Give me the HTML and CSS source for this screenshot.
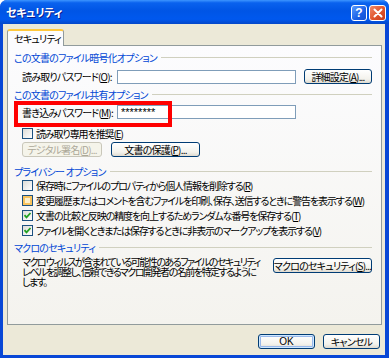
FILE: index.html
```html
<!DOCTYPE html>
<html lang="ja">
<head>
    <meta charset="UTF-8">
    <title>セキュリティ</title>
    <link rel="stylesheet" href="styles.css">
</head>
<body>

    <div class="window">
        <div class="titlebar">
            <span class="title">セキュリティ</span>
            <div class="controls">
                <div class="tbtn help">?</div>
                <div class="tbtn close">
                    <svg width="10" height="10" viewBox="0 0 10 10"><path d="M1.5 1.5 L8.5 8.5 M8.5 1.5 L1.5 8.5" stroke="#fff" stroke-width="2" stroke-linecap="round"/></svg>
                </div>
            </div>
        </div>

        <div class="client">
            <div class="tabs">
                <div class="tab">セキュリティ</div>
            </div>

            <div class="panel">
                <div class="group-title first">この文書のファイル暗号化オプション</div>
                <div class="row row-read">
                    <span class="label">読み取りパスワード(<u>O</u>):</span>
                    <div class="input"></div>
                    <div class="btn btn-adv">詳細設定(<u>A</u>)...</div>
                </div>

                <div class="group-title g2">この文書のファイル共有オプション</div>
                <div class="row row-write">
                    <span class="label">書き込みパスワード(<u>M</u>):</span>
                    <div class="input">********</div>
                </div>
                <div class="check-row ro">
                    <span class="cb"></span>
                    <span>読み取り専用を推奨(<u>E</u>)</span>
                </div>
                <div class="row row-buttons">
                    <div class="btn disabled btn-sign">デジタル署名(<u>D</u>)...</div>
                    <div class="btn btn-protect">文書の保護(<u>P</u>)...</div>
                </div>

                <div class="group-title g3">プライバシー オプション</div>
                <div class="checks">
                    <div class="check-row">
                        <span class="cb"></span>
                        <span>保存時にファイルのプロパティから個人情報を削除する(<u>R</u>)</span>
                    </div>
                    <div class="check-row">
                        <span class="cb hot"></span>
                        <span>変更履歴またはコメントを含むファイルを印刷、保存、送信するときに警告を表示する(<u>W</u>)</span>
                    </div>
                    <div class="check-row">
                        <span class="cb on"><svg width="9" height="9" viewBox="0 0 9 9"><path d="M1.5 4.2 L3.5 6.4 L7.5 2" stroke="#21A121" stroke-width="1.8" fill="none"/></svg></span>
                        <span>文書の比較と反映の精度を向上するためランダムな番号を保存する(<u>T</u>)</span>
                    </div>
                    <div class="check-row">
                        <span class="cb on"><svg width="9" height="9" viewBox="0 0 9 9"><path d="M1.5 4.2 L3.5 6.4 L7.5 2" stroke="#21A121" stroke-width="1.8" fill="none"/></svg></span>
                        <span>ファイルを開くときまたは保存するときに非表示のマークアップを表示する(<u>V</u>)</span>
                    </div>
                </div>

                <div class="group-title g4">マクロのセキュリティ</div>
                <div class="row row-macro">
                    <p class="macro-text">マクロ ウィルスが含まれている可能性のあるファイルのセキュリティ<br>レベルを調整し、信頼できるマクロ開発者の名前を特定するように<br>します。</p>
                    <div class="btn btn-macro">マクロのセキュリティ(<u>S</u>)...</div>
                </div>
            </div>

            <div class="footer">
                <div class="btn default">OK</div>
                <div class="btn">キャンセル</div>
            </div>
        </div>

        <!-- annotation frame -->
        <div class="highlight"></div>
    </div>

</body>
</html>
```

FILE: styles.css
```css
body {
    margin: 0;
    font-family: "Noto Sans CJK JP", sans-serif;
    font-size: 10px;
    font-feature-settings: "palt";
    letter-spacing: -0.8px;
    color: #000;
    background: #fff;
}

u {
    text-decoration: underline;
    text-underline-offset: 1px;
}

.window {
    position: relative;
    width: 389px;
    height: 358px;
    box-sizing: border-box;
    background: #0847D6;
    border-radius: 7px 7px 0 0;
    display: flex;
    flex-direction: column;
    overflow: hidden;
}

.titlebar {
    height: 24px;
    flex: none;
    display: flex;
    align-items: center;
    padding: 0 3px 0 6px;
    background: linear-gradient(#3D95FF 0%, #0A62EE 12%, #0055E5 45%, #0058EE 80%, #0447C8 100%);
}

.title {
    color: #fff;
    font-weight: bold;
    font-size: 11px;
    letter-spacing: -0.3px;
    text-shadow: 1px 1px #0A1E8E;
}

.controls {
    margin-left: auto;
    display: flex;
    gap: 2px;
    margin-top: 1px;
}

.tbtn {
    width: 16px;
    height: 16px;
    box-sizing: border-box;
    border: 1px solid #fff;
    border-radius: 3px;
    display: flex;
    align-items: center;
    justify-content: center;
    color: #fff;
    font-family: "Liberation Sans", sans-serif;
    font-weight: bold;
    font-size: 12px;
    letter-spacing: 0;
}

.help {
    background: linear-gradient(135deg, #5A9CFF, #1A5FE6 60%, #1450D0);
}

.close {
    width: 17px;
    background: linear-gradient(135deg, #F08A6A, #E0542B 55%, #C5391A);
}

.client {
    flex: 1;
    margin: 0 4px 3px 3px;
    padding: 5px 3px 0 4px;
    background: #ECE9D8;
}

.tabs {
    display: flex;
    height: 16px;
    position: relative;
    z-index: 1;
}

.tab {
    width: 57px;
    height: 17px;
    box-sizing: border-box;
    padding: 2px 0 0 6px;
    border: 1px solid #919B9C;
    border-top: 2px solid #FFC83C;
    border-bottom: none;
    border-radius: 3px 3px 0 0;
    background: #FCFCFE;
    line-height: 12px;
    white-space: nowrap;
}

.panel {
    height: 280px;
    box-sizing: border-box;
    border: 1px solid #919B9C;
    padding: 5px 9px 0 6px;
    background: linear-gradient(#FCFCFE, #F4F3EE);
}

.group-title {
    display: flex;
    align-items: center;
    height: 12px;
    color: #0046D5;
    white-space: nowrap;
}

.group-title::after {
    content: "";
    flex: 1;
    height: 1px;
    margin-left: 4px;
    background: #D0D0BF;
}

.g2 { margin-top: 4px; }
.g3 { margin-top: 8px; }
.g4 { margin-top: 4px; }

.row {
    display: flex;
    align-items: center;
    margin-left: 8px;
}

.label {
    width: 95px;
    flex: none;
    white-space: nowrap;
}

.input {
    width: 179px;
    height: 14px;
    box-sizing: border-box;
    border: 1px solid #7F9DB9;
    background: #fff;
    padding-left: 3px;
    line-height: 12px;
    font-family: "Liberation Sans", sans-serif;
    font-size: 11px;
    letter-spacing: 0;
}

.row-read { margin-top: 6px; height: 15px; }
.row-write { margin-top: 5px; height: 14px; }

.btn {
    height: 15px;
    box-sizing: border-box;
    border: 1px solid #003C74;
    border-radius: 3px;
    background: linear-gradient(#FFFFFF, #F3F2EC 70%, #DEDAD0);
    display: flex;
    align-items: center;
    justify-content: center;
    white-space: nowrap;
}

.btn-adv {
    width: 68px;
    margin-left: 8px;
}

.row-buttons {
    margin-top: 2px;
    gap: 9px;
}

.btn-sign { width: 80px; }
.btn-protect { width: 89px; }

.btn.disabled {
    border-color: #C9C7BA;
    background: #F5F4EA;
    color: #ACA899;
}

.check-row {
    display: flex;
    align-items: center;
    gap: 3px;
    height: 13px;
    margin-left: 8px;
    white-space: nowrap;
    letter-spacing: -1.1px;
}

.ro { margin-top: 8px; }

.checks {
    display: flex;
    flex-direction: column;
    gap: 2px;
    margin-top: 2px;
}

.cb {
    width: 11px;
    height: 11px;
    flex: none;
    box-sizing: border-box;
    border: 1px solid #1C5180;
    background: linear-gradient(135deg, #DCDCD7, #FFFFFF);
    display: flex;
    align-items: center;
    justify-content: center;
}

.cb.hot {
    box-shadow: inset 0 0 0 2px #F8C35E;
    background: #FDEFC8;
}

.row-macro {
    margin-top: 4px;
    align-items: flex-start;
}

.macro-text {
    margin: 0;
    width: 251px;
    line-height: 10px;
    white-space: nowrap;
    letter-spacing: -1.5px;
}

.btn-macro {
    width: 99px;
    margin-top: 1px;
}

.footer {
    display: flex;
    justify-content: flex-end;
    gap: 8px;
    margin-top: 9px;
    padding-right: 2px;
}

.footer .btn {
    width: 57px;
}

.footer .btn.default {
    box-shadow: inset 0 0 0 1px #CEE7FF, inset 0 0 0 2px #98B8EA;
    font-family: "Liberation Sans", sans-serif;
    font-size: 10px;
    letter-spacing: 0;
}

.highlight {
    position: absolute;
    left: 14px;
    top: 101px;
    width: 158px;
    height: 26px;
    box-sizing: border-box;
    border: 4px solid #F00;
}
```
